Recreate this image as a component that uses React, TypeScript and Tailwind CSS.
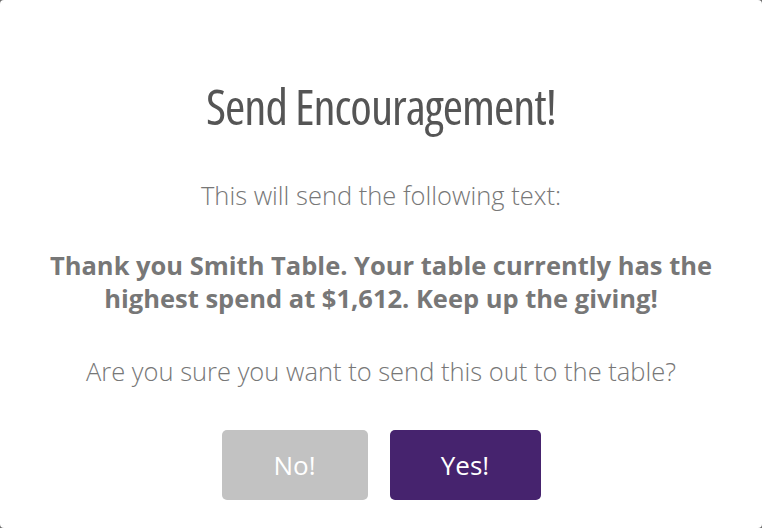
export default function App() {
  return (
    <div className="h-[528px] w-[762px] bg-[#6b6b6b]">
      <div className="flex h-full w-full flex-col items-center rounded-[4px] bg-white text-center font-['Open_Sans',sans-serif] text-[#777]">
        <h1 className="mt-[76px] text-[49px] leading-[60px] font-normal tracking-[-1px] text-[#555] [font-stretch:75%]">
          Send Encouragement!
        </h1>
        <p className="mt-[42px] text-[25.5px] leading-[34px] font-light">
          This will send the following text:
        </p>
        <p className="mt-[37px] w-[700px] text-[25.5px] leading-[33px] font-bold">
          Thank you Smith Table. Your table currently has the
          <br />
          highest spend at $1,612. Keep up the giving!
        </p>
        <p className="mt-[39px] text-[25.5px] leading-[34px] font-light">
          Are you sure you want to send this out to the table?
        </p>
        <div className="mt-[42px] flex gap-[22px]">
          <button
            className="h-[70px] w-[146px] rounded-[5px] bg-[#c2c2c2] text-[26px] text-white"
            type="button"
          >
            No!
          </button>
          <button
            className="h-[70px] w-[151px] rounded-[5px] bg-[#46236e] text-[26px] text-white"
            type="button"
          >
            Yes!
          </button>
        </div>
      </div>
    </div>
  );
}
